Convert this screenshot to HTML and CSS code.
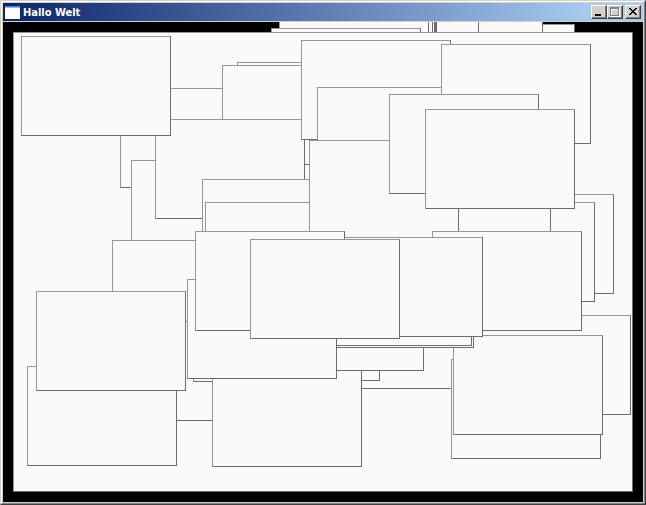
FILE: index.html
```html
<!DOCTYPE html>
<html lang="de">
<head>
<meta charset="utf-8">
<title>Hallo Welt</title>
<link rel="stylesheet" href="styles.css">
</head>
<body>
<div class="window">
  <div class="frame">
    <header class="titlebar">
      <svg class="app-icon" width="15" height="13" viewBox="0 0 15 13" shape-rendering="crispEdges">
        <rect width="15" height="13" fill="#fff"/>
        <rect width="15" height="1" fill="#2f8fe0"/>
        <rect y="1" width="15" height="1" fill="#7cbcf0"/>
      </svg>
      <h1 class="title">Hallo Welt</h1>
      <div class="controls">
        <button class="control" aria-label="Minimieren">
          <svg width="12" height="10" viewBox="0 0 12 10" shape-rendering="crispEdges"><rect x="2" y="7" width="6" height="2" fill="#000"/></svg>
        </button>
        <button class="control" aria-label="Maximieren">
          <svg width="12" height="10" viewBox="0 0 12 10" shape-rendering="crispEdges"><path d="M2 1h9v9H2zM3 3v6h7V3z" fill="#fff" fill-rule="evenodd"/><path d="M1 0h9v9H1zM2 2v6h7V2z" fill="#808080" fill-rule="evenodd"/></svg>
        </button>
        <button class="control close" aria-label="Schließen">
          <svg width="12" height="10" viewBox="0 0 12 10" shape-rendering="crispEdges"><path d="M2 1h2v1h1v1h2V2h1V1h2v1H9v1H8v1H7v1h1v1h1v1h1v1H8V7H7V6H5v1H4v1H2V7h1V6h1V5h1V4H4V3H3V2H2z" fill="#000"/></svg>
        </button>
      </div>
    </header>
    <main class="client" id="client"></main>
  </div>
</div>
<script src="app.js"></script>
</body>
</html>
```
FILE: styles.css
```css
body {
  margin: 0;
  overflow: hidden;
}

.window {
  box-sizing: border-box;
  width: 646px;
  height: 505px;
  border: 1px solid;
  border-color: #d4d0c8 #404040 #404040 #d4d0c8;
}

.frame {
  box-sizing: border-box;
  height: 100%;
  padding: 1px;
  border: 1px solid;
  border-color: #fff #808080 #808080 #fff;
  background: #d4d0c8;
}

.titlebar {
  display: flex;
  align-items: center;
  box-sizing: border-box;
  height: 18px;
  margin-bottom: 1px;
  padding: 0 2px;
  background: linear-gradient(to right, #0a246a, #a6caf0 588px);
}

.app-icon {
  display: block;
}

.title {
  flex: 1;
  margin: 0 0 0 3px;
  padding-top: 1px;
  color: #fff;
  font: bold 11px/17px "DejaVu Sans Condensed", "DejaVu Sans", Tahoma, sans-serif;
  font-stretch: condensed;
  white-space: nowrap;
}

.controls {
  display: flex;
}

.control {
  box-sizing: border-box;
  width: 16px;
  height: 14px;
  padding: 0;
  border: 1px solid;
  border-color: #fff #404040 #404040 #fff;
  background: #d4d0c8;
  box-shadow: inset -1px -1px #808080;
}

.control svg {
  display: block;
  margin: 0 0 0 1px;
}

.close {
  margin-left: 2px;
}

.client {
  position: relative;
  width: 640px;
  height: 480px;
  overflow: hidden;
  background: #000;
}

.box {
  position: absolute;
  box-sizing: border-box;
  width: 150px;
  height: 100px;
  border: 1px solid;
  border-color: #969696 #6c6c6c #6c6c6c #969696;
  background: #fafafa;
}

.panel {
  width: 620px;
  height: 460px;
}
```
FILE: app.js
```js
// Window coordinates of each box, in painting order.
const ORIGIN = { x: 3, y: 22 };

const behind = [
  [425, 24], [393, -40], [329, -30], [287, -50], [286, -55],
  [285, -60], [283, -35], [279, -20], [271, 28],
];

const inFront = [
  [120, 88], [237, 62], [222, 65], [131, 160], [155, 119],
  [112, 240], [301, 40], [317, 87], [202, 179], [205, 202],
  [464, 194], [445, 202], [401, 150], [309, 140], [441, 44],
  [389, 94], [425, 109], [481, 315], [330, 289], [451, 359],
  [453, 335], [432, 231], [150, 321], [27, 366], [36, 291],
  [230, 281], [193, 282], [212, 367], [274, 271], [324, 248],
  [322, 246], [187, 279], [333, 237], [195, 231], [250, 239],
  [21, 36],
];

const client = document.getElementById("client");

function addBox(x, y, extraClass) {
  const box = document.createElement("div");
  box.className = extraClass ? "box " + extraClass : "box";
  box.style.left = x - ORIGIN.x + "px";
  box.style.top = y - ORIGIN.y + "px";
  client.appendChild(box);
}

behind.forEach(([x, y]) => addBox(x, y));
addBox(13, 32, "panel");
inFront.forEach(([x, y]) => addBox(x, y));
```
